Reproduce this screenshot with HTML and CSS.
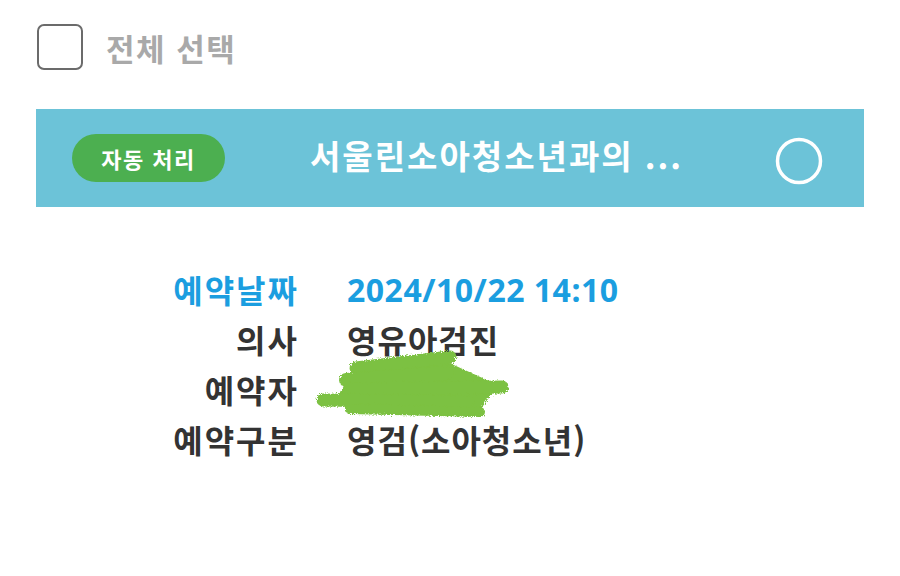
FILE: index.html
```html
<!DOCTYPE html>
<html lang="ko">
<head>
<meta charset="utf-8">
<link rel="stylesheet" href="styles.css">
</head>
<body>
<div class="select-all">
  <span class="checkbox"></span>
  <span class="select-label">전체 선택</span>
</div>
<div class="banner">
  <span class="badge">자동 처리</span>
  <span class="title">서울린소아청소년과의 ...</span>
  <svg class="radio" width="50" height="50" viewBox="0 0 50 50"><circle cx="25" cy="25" r="21.5" fill="none" stroke="#fff" stroke-width="3.5"/></svg>
</div>
<div class="info">
  <div class="label accent">예약날짜</div><div class="value accent date">2024/10/22 14:10</div>
  <div class="label">의사</div><div class="value">영유아검진</div>
  <div class="label">예약자</div><div class="value">&nbsp;</div>
  <div class="label">예약구분</div><div class="value">영검(소아청소년)</div>
  <svg class="scribble" width="900" height="576" viewBox="0 0 900 576">
    <defs>
      <filter id="rough" x="-10%" y="-30%" width="120%" height="160%">
        <feTurbulence type="fractalNoise" baseFrequency="0.9" numOctaves="2" result="n"/>
        <feDisplacementMap in="SourceGraphic" in2="n" scale="5"/>
      </filter>
    </defs>
    <g filter="url(#rough)">
      <polygon points="352,374 445,361 498,385 478,413 332,404" fill="#7cc142"/>
      <g fill="none" stroke="#7cc142" stroke-linecap="round">
        <path d="M356 368 L450 357" stroke-width="13"/>
        <path d="M346 380 L447 373" stroke-width="14"/>
        <path d="M352 389 L502 387" stroke-width="13"/>
        <path d="M323 400 L468 402" stroke-width="13"/>
        <path d="M350 409 L480 412" stroke-width="10"/>
      </g>
    </g>
  </svg>
</div>
</body>
</html>
```
FILE: styles.css
```css
html, body {
  margin: 0;
  padding: 0;
  background: #ffffff;
}
body {
  width: 900px;
  height: 576px;
  overflow: hidden;
  position: relative;
  font-family: "Noto Sans CJK KR", "Noto Sans", sans-serif;
}
.select-all {
  display: flex;
  align-items: center;
  gap: 23px;
  padding: 24px 0 0 37px;
  height: 46px;
}
.checkbox {
  box-sizing: border-box;
  width: 46px;
  height: 46px;
  border: 2px solid #6b6b6b;
  border-radius: 7px;
}
.select-label {
  font-size: 31px;
  font-weight: 700;
  color: #a9a9a9;
  letter-spacing: 1.5px;
}
.banner {
  margin: 39px 36px 0 36px;
  height: 98px;
  background: #6cc3d8;
  display: flex;
  align-items: center;
  padding: 0 40px 0 36px;
  box-sizing: border-box;
}
.badge {
  width: 153px;
  height: 48px;
  border-radius: 24px;
  background: #4caf50;
  color: #fff;
  font-size: 22px;
  font-weight: 700;
  letter-spacing: 1.5px;
  display: flex;
  align-items: center;
  justify-content: center;
}
.title {
  margin-left: 85px;
  color: #fff;
  font-size: 33px;
  font-weight: 700;
  letter-spacing: 2px;
  flex: 1;
  position: relative;
  top: -3px;
}
.radio {
  display: block;
  position: relative;
  top: 3px;
}
.info {
  position: relative;
  display: grid;
  grid-template-columns: 261px auto;
  grid-auto-rows: 50px;
  column-gap: 50px;
  padding-left: 36px;
  margin-top: 57px;
  font-size: 32px;
  font-weight: 700;
  color: #333;
  letter-spacing: 1px;
}
.label, .value {
  display: flex;
  align-items: center;
}
.label {
  justify-content: flex-end;
  letter-spacing: 2px;
  margin-right: -2px;
}
.date {
  font-family: "Noto Sans", "Noto Sans CJK KR", sans-serif;
  letter-spacing: 0.5px;
}
.accent {
  color: #1b9ee0;
}
.scribble {
  position: absolute;
  left: 0;
  top: -264px;
  pointer-events: none;
}
```
